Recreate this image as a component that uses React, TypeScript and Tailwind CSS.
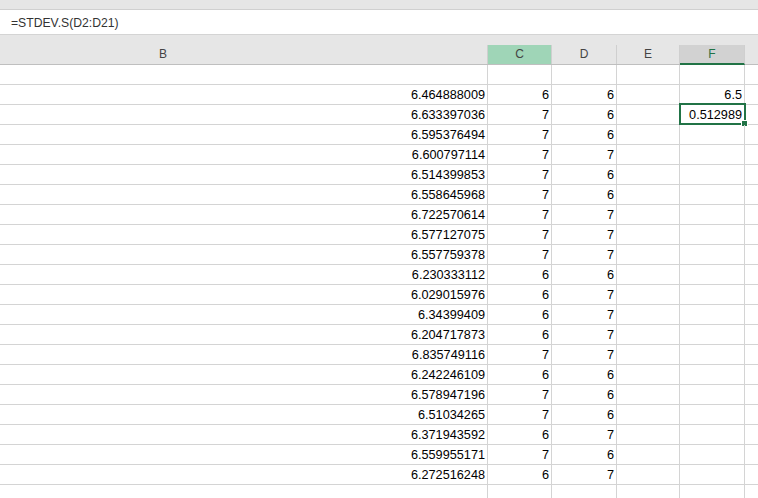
const rows: [string, string, string][] = [
  ["6.464888009", "6", "6"],
  ["6.633397036", "7", "6"],
  ["6.595376494", "7", "6"],
  ["6.600797114", "7", "7"],
  ["6.514399853", "7", "6"],
  ["6.558645968", "7", "6"],
  ["6.722570614", "7", "7"],
  ["6.577127075", "7", "7"],
  ["6.557759378", "7", "7"],
  ["6.230333112", "6", "6"],
  ["6.029015976", "6", "7"],
  ["6.34399409", "6", "7"],
  ["6.204717873", "6", "7"],
  ["6.835749116", "7", "7"],
  ["6.242246109", "6", "6"],
  ["6.578947196", "7", "6"],
  ["6.51034265", "7", "6"],
  ["6.371943592", "6", "7"],
  ["6.559955171", "7", "6"],
  ["6.272516248", "6", "7"],
];

const fValues: Record<number, string> = { 1: "6.5", 2: "0.512989" };

const cell =
  "h-[20px] shrink-0 border-b border-r border-[#d4d4d4] pr-[2px] pt-[1px] text-right leading-[19px] text-black";

function Row({ index, data }: { index: number; data?: [string, string, string] }) {
  const f = fValues[index];
  return (
    <div className="flex">
      <div className={`${cell} w-[488px]`}>{data?.[0]}</div>
      <div className={`${cell} w-[64px]`}>{data?.[1]}</div>
      <div className={`${cell} w-[65px]`}>{data?.[2]}</div>
      <div className={`${cell} w-[63px]`} />
      <div className={`${cell} relative w-[65px]`}>
        {f}
        {index === 2 && (
          <div className="absolute left-[-1px] top-[-2px] h-[22px] w-[67px] border-2 border-[#217346]">
            <div className="absolute bottom-[-4px] right-[-4px] h-[7px] w-[7px] border border-white bg-[#217346]" />
          </div>
        )}
      </div>
      <div className={`${cell} w-[13px] border-r-0`} />
    </div>
  );
}

export default function App() {
  const all = [undefined, ...rows, undefined, undefined];
  return (
    <div
      className="h-[498px] w-[758px] overflow-hidden bg-white text-[12.7px]"
      style={{ fontFamily: '"Liberation Sans", Arial, sans-serif' }}
    >
      <div className="h-[10px] border-b border-[#d0d0d0] bg-[#e6e6e6]" />
      <div className="h-[25px] border-b border-[#d4d4d4] pl-[11px] pt-[2px] text-[12.2px] leading-[22px] text-[#333]">
        =STDEV.S(D2:D21)
      </div>
      <div className="bg-[#e6e6e6] pt-[10px]">
        <div className="flex h-[20px] border-b border-[#bfbfbf] text-[12px] leading-[19px] text-[#444]">
          <div className="w-[488px] border-r border-[#cfcfcf]">
            <div className="w-[326px] text-center">B</div>
          </div>
          <div className="w-[64px] border-r border-[#cfcfcf] bg-[#9fd5b7] text-center">C</div>
          <div className="w-[65px] border-r border-[#cfcfcf] text-center">D</div>
          <div className="w-[63px] border-r border-[#cfcfcf] text-center">E</div>
          <div className="-mb-px w-[65px] border-b-2 border-r border-[#217346] border-r-[#cfcfcf] bg-[#d2d2d2] text-center text-[#217346]">
            F
          </div>
          <div className="w-[13px]" />
        </div>
      </div>
      {all.map((r, i) => (
        <Row key={i} index={i} data={r} />
      ))}
    </div>
  );
}
